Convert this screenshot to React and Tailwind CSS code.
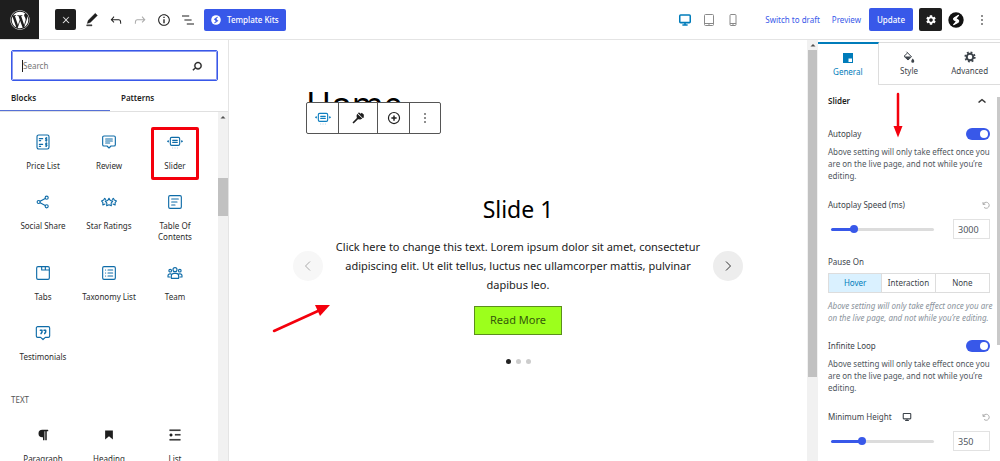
import { useState } from 'react';
import clsx from 'clsx';
import { FaWordpress, FaParagraph } from 'react-icons/fa';
import { MdSettings } from 'react-icons/md';

const PATHS = {
  close: 'M13 11.8l6.1-6.3-1-1-6.1 6.2-6.1-6.2-1 1 6.1 6.3-6.5 6.7 1 1 6.5-6.6 6.5 6.6 1-1z',
  edit: 'M20.1 5.1L16.9 2 6.2 12.7l-1.3 4.4 4.5-1.3L20.1 5.1zM4 20.8h8v-1.5H4v1.5z',
  undo: 'M18.3 11.7c-.6-.6-1.4-.9-2.3-.9H6.7l2.9-3.3-1.1-1-4.5 5L8.5 16l1-1-2.7-2.7H16c.5 0 .9.2 1.3.5 1 1 1 3.4 1 4.5v.3h1.5v-.2c0-1.5 0-4.3-1.5-5.7z',
  redo: 'M15.6 6.5l-1.1 1 2.9 3.3H8c-.9 0-1.7.3-2.3.9-1.4 1.5-1.4 4.2-1.4 5.6v.2h1.5v-.3c0-1.1 0-3.5 1-4.5.3-.3.7-.5 1.3-.5h9.2L14.5 15l1.1 1.1 4.6-4.6-4.6-5z',
  info: 'M12 3.2c-4.8 0-8.8 3.9-8.8 8.8 0 4.8 3.9 8.8 8.8 8.8 4.8 0 8.8-3.9 8.8-8.8 0-4.8-4-8.8-8.8-8.8zm0 16c-4 0-7.2-3.3-7.2-7.2C4.8 8 8 4.8 12 4.8s7.2 3.3 7.2 7.2c0 4-3.2 7.2-7.2 7.2zM11 17h2v-6h-2v6zm0-8h2V7h-2v2z',
  outline: 'M13.8 5.2H3v1.5h10.8V5.2zm-3.6 12v1.5H21v-1.5H10.2zm7.2-6H6.6v1.5h10.8v-1.5z',
  search: 'M13.5 6C10.5 6 8 8.5 8 11.5c0 1.1.3 2.1.9 3l-3.4 3 1 1.1 3.4-2.9c1 .9 2.2 1.4 3.6 1.4 3 0 5.5-2.5 5.5-5.5C19 8.5 16.5 6 13.5 6zm0 9.5c-2.2 0-4-1.8-4-4s1.8-4 4-4 4 1.8 4 4-1.8 4-4 4z',
  more: 'M13 19h-2v-2h2v2zm0-6h-2v-2h2v2zm0-6h-2V5h2v2z',
  chevronUp: 'M6.5 13.4L12 9l5.5 4.4-.9 1.2L12 11l-4.5 3.6-1-1.2z',
  bookmark: 'M6.2 5.2v13.4l5.8-4.8 5.8 4.8V5.2z',
  list: 'M4 4v1.5h16V4H4zm8 8.5h8V11h-8v1.5zM4 20h16v-1.5H4V20zm4-8c0-1.1-.9-2-2-2s-2 .9-2 2 .9 2 2 2 2-.9 2-2z',
};

function Icon({ name, className = 'size-4', bold }) {
  return (
    <svg
      viewBox="0 0 24 24"
      fill="currentColor"
      stroke={bold ? 'currentColor' : 'none'}
      strokeWidth="0.6"
      className={className}
      aria-hidden="true"
    >
      <path d={PATHS[name]} />
    </svg>
  );
}

function Line({ children, className = 'size-4' }) {
  return (
    <svg
      viewBox="0 0 24 24"
      fill="none"
      stroke="currentColor"
      strokeWidth="1.7"
      strokeLinecap="round"
      strokeLinejoin="round"
      className={className}
      aria-hidden="true"
    >
      {children}
    </svg>
  );
}

function SliderIcon({ className }) {
  return (
    <Line className={className}>
      <rect x="5" y="5" width="14" height="12" rx="2" />
      <path d="M8.5 9.5h7M8.5 12.5h7" />
      <path d="M2 10.2v1.6L1 11zM22 10.2v1.6l1-.8z" fill="currentColor" />
      <path d="M8.5 21h.1M12 21h.1M15.5 21h.1" strokeWidth="1.2" opacity="0.5" />
    </Line>
  );
}

function SpectraMark({ className, circle, bolt }) {
  return (
    <svg viewBox="0 0 24 24" className={className} aria-hidden="true">
      <circle cx="12" cy="12" r="11.5" fill={circle} />
      <path
        d="M15.8 5l-6 3.4c-1.8 1-1.9 2.5-.4 3.6l3.6 2.2-4.6 4.8 6.2-3.300c1.8-1 2-2.600.4-3.700l-3.400-2.200z"
        fill={bolt}
        stroke={bolt}
        strokeWidth="1.6"
        strokeLinejoin="round"
      />
    </svg>
  );
}

function DesktopIcon({ className }) {
  return (
    <svg viewBox="0 0 24 24" fill="none" stroke="currentColor" strokeWidth="2.6" className={className} aria-hidden="true">
      <rect x="3" y="3.5" width="18" height="13" rx="1.5" />
      <path d="M7.5 20.5h9M12 17v3" />
    </svg>
  );
}

function PaintIcon({ className }) {
  return (
    <svg viewBox="0 0 24 24" className={className} aria-hidden="true">
      <path d="M7 1.5l10 10-7 6.5L2 10.5 9 4" fill="none" stroke="currentColor" strokeWidth="2" />
      <path d="M3 11h13l-6 6.5z" fill="currentColor" />
      <path d="M19.5 15s3 3.500 3 5.300a3 3 0 0 1-6 0c0-1.800 3-5.300 3-5.300z" fill="currentColor" />
    </svg>
  );
}

const BLOCKS = [
  {
    name: 'Price List',
    icon: (
      <Line>
        <rect x="3" y="1.5" width="18" height="21" rx="2.5" />
        <path d="M6.5 7h5M6.5 15.5h5M6.5 10h2M6.5 18.5h2" />
        <path d="M18 6h-2.200v2H18v2h-2.500M17 5v6M18 14h-2.200v2H18v2h-2.500M17 13v6" strokeWidth="1.400" />
      </Line>
    ),
  },
  {
    name: 'Review',
    icon: (
      <Line>
        <path d="M4.500 3h15a2 2 0 0 1 2 2v11a2 2 0 0 1-2 2h-4.500l-3 3-3-3H4.500a2 2 0 0 1-2-2V5a2 2 0 0 1 2-2z" />
        <path d="M7 7.500h10M7 10.500h10M7 13.500h6" />
      </Line>
    ),
  },
  { name: 'Slider', icon: <SliderIcon /> },
  {
    name: 'Social Share',
    icon: (
      <Line>
        <circle cx="5.500" cy="12" r="2.300" />
        <circle cx="17.500" cy="5.500" r="2.300" />
        <circle cx="17.500" cy="18.500" r="2.300" />
        <path d="M7.600 10.900l7.800-4.300M7.600 13.100l7.800 4.300" />
      </Line>
    ),
  },
  {
    name: 'Star Ratings',
    icon: (
      <Line>
        <path d="M12 6.500l2 3.300 3.600.900-2.400 2.900.300 4-3.500-1.500-3.500 1.500.300-4-2.400-2.900 3.600-.900z" />
        <path d="M7 8L5.500 6.500 4 9 .8 10.500l2 2.500v3.500L6 15M17 8l1.500-1.500L20 9l3.200 1.500-2 2.500v3.500L18 15" />
      </Line>
    ),
  },
  {
    name: 'Table Of Contents',
    icon: (
      <Line>
        <rect x="2.500" y="2.500" width="19" height="19" rx="2" />
        <path d="M7 7.500h10M7 12h8M7 16.500h5" />
      </Line>
    ),
  },
  {
    name: 'Tabs',
    icon: (
      <Line>
        <rect x="2.500" y="2.500" width="19" height="19" rx="2" />
        <path d="M10 3v4.500h11M15.500 3v4.500" />
      </Line>
    ),
  },
  {
    name: 'Taxonomy List',
    icon: (
      <Line>
        <rect x="2.500" y="2.500" width="19" height="19" rx="2" />
        <path d="M10.500 7.500h7M10.500 12h7M10.500 16.500h7M6.800 7.500h.1M6.800 12h.1M6.800 16.500h.1" />
      </Line>
    ),
  },
  {
    name: 'Team',
    icon: (
      <Line>
        <circle cx="12" cy="7" r="3" />
        <circle cx="4.800" cy="8.500" r="2" />
        <circle cx="19.200" cy="8.500" r="2" />
        <path d="M6.500 20v-3.500a4 4 0 0 1 4-4h3a4 4 0 0 1 4 4V20zM6 13.300H4.500a3 3 0 0 0-3 3V18h3M18 13.300h1.500a3 3 0 0 1 3 3V18h-3" />
      </Line>
    ),
  },
  {
    name: 'Testimonials',
    icon: (
      <Line>
        <path d="M4 2.500h16a2 2 0 0 1 2 2v12a2 2 0 0 1-2 2h-4.500L12 21.800l-3.500-3.300H4a2 2 0 0 1-2-2v-12a2 2 0 0 1 2-2z" />
        <path d="M8 8h2.500v2.500L9 13M13.500 8H16v2.500L14.500 13" strokeWidth="2.200" />
      </Line>
    ),
  },
];

const TEXT_BLOCKS = [
  { name: 'Paragraph', icon: <FaParagraph className="size-3" /> },
  { name: 'Heading', icon: <Icon name="bookmark" /> },
  { name: 'List', icon: <Icon name="list" bold /> },
];

function BlockGrid({ blocks, tone }) {
  return (
    <div className="grid grid-cols-3 px-2.5">
      {blocks.map((block) => (
        <button
          key={block.name}
          type="button"
          className="relative flex flex-col items-center gap-2.5 px-2 pt-2 pb-[15px] text-[8px] leading-[11px] text-[#2c2c2c]"
        >
          <span className={clsx('flex h-4 items-center', tone)}>{block.icon}</span>
          <span className="-mx-2">{block.name === 'Table Of Contents' ? <>Table Of<br />Contents</> : block.name}</span>
          {block.name === 'Slider' && (
            <span className="absolute inset-x-[9px] top-px bottom-1.5 rounded-xs border-3 border-[#f4000c]" />
          )}
        </button>
      ))}
    </div>
  );
}

function Header() {
  return (
    <header className="flex h-10 shrink-0 items-center border-b border-[#e4e4e4] bg-white text-[8px] text-[#1e1e1e]">
      <a href="#dashboard" aria-label="View Pages" className="flex h-full w-[39px] items-center justify-center bg-[#1e1e1e] text-white">
        <FaWordpress className="size-5" />
      </a>
      <button type="button" aria-label="Close inserter" className="ml-4 flex size-[21px] items-center justify-center rounded-xs bg-[#1e1e1e] text-white">
        <Icon name="close" className="size-2.5" bold />
      </button>
      <div className="ml-2 flex gap-2">
        <button type="button" aria-label="Tools"><Icon name="edit" bold /></button>
        <button type="button" aria-label="Undo"><Icon name="undo" /></button>
        <button type="button" aria-label="Redo" className="text-[#aaa]"><Icon name="redo" /></button>
        <button type="button" aria-label="Details"><Icon name="info" /></button>
        <button type="button" aria-label="List view"><Icon name="outline" /></button>
      </div>
      <button type="button" className="ml-2 flex h-[22px] items-center gap-1.5 rounded-xs bg-[#3858e9] px-[7px] font-medium text-white">
        <SpectraMark className="size-2.5" circle="#fff" bolt="#3858e9" />
        Template Kits
      </button>

      <div className="ml-auto flex items-center">
        <div className="flex items-center gap-2 text-[#8a8a8a]">
          <button type="button" aria-label="Desktop" className="flex w-4 justify-center text-[#007cba]"><DesktopIcon className="size-3.5" /></button>
          <button type="button" aria-label="Tablet" className="flex w-4 justify-center">
            <svg viewBox="0 0 12 14" fill="none" stroke="currentColor" className="h-3.5 w-3">
              <rect x="1.500" y="1.500" width="9" height="11" rx="1" />
              <path d="M1.500 10.500h9M5.500 11.500h1" />
            </svg>
          </button>
          <button type="button" aria-label="Mobile" className="flex w-4 justify-center">
            <svg viewBox="0 0 12 14" fill="none" stroke="currentColor" className="h-3.5 w-3">
              <rect x="3" y="1.500" width="6" height="11" rx="1" />
              <path d="M3 10.500h6M5.500 11.500h1" />
            </svg>
          </button>
        </div>
        <button type="button" className="ml-6 text-[#3858e9]">Switch to draft</button>
        <a href="#preview" className="ml-3 text-[#3858e9]">Preview</a>
        <button type="button" className="ml-2 h-[23px] rounded-xs bg-[#3858e9] px-2 font-medium text-white">Update</button>
        <button type="button" aria-label="Settings" className="ml-1.5 flex size-[23px] items-center justify-center rounded-xs bg-[#1e1e1e] text-white">
          <MdSettings className="size-3" />
        </button>
        <button type="button" aria-label="Spectra" className="ml-1.5">
          <SpectraMark className="size-4" circle="#111" bolt="#fff" />
        </button>
        <button type="button" aria-label="Options" className="mr-2.5 ml-2.5"><Icon name="more" /></button>
      </div>
    </header>
  );
}

function Inserter() {
  return (
    <aside className="flex w-[229px] shrink-0 flex-col border-r border-[#e4e4e4] bg-white text-[8px]">
      <div className="px-[11px] pt-2.5">
        <label className="-mr-px flex h-[31px] items-center rounded-xs border border-[#3858e9] pr-3 pl-2.5 outline-1 -outline-offset-2 outline-[#8c9bef]">
          <span className="h-3 w-px bg-[#1e1e1e]" />
          <input
            type="search"
            aria-label="Search for blocks and patterns"
            placeholder="Search"
            className="min-w-0 flex-1 outline-none placeholder:text-[#757575]"
          />
          <Icon name="search" className="size-4 text-[#1e1e1e]" bold />
        </label>
      </div>
      <div className="flex h-[31px] shrink-0 border-b border-[#e0e0e0] font-semibold text-[#1e1e1e]">
        <button type="button" className="w-[110px] border-b border-[#5670d6] pt-1 pl-[11px] text-left">Blocks</button>
        <button type="button" className="pt-1 pl-[11px]">Patterns</button>
      </div>
      <div className="flex min-h-0 flex-1">
        <div className="min-w-0 flex-1 overflow-hidden pt-3.5">
          <BlockGrid blocks={BLOCKS} tone="text-[#0f6ca8]" />
          <h2 className="pt-4 pb-3 pl-[11px] leading-[14px] text-[#555]">TEXT</h2>
          <BlockGrid blocks={TEXT_BLOCKS} tone="text-[#1e1e1e]" />
        </div>
        <div className="flex w-2.5 flex-col items-center bg-[#f1f1f1]">
          <ScrollArrow />
          <div className="mt-14 h-[38px] w-2.5 bg-[#c1c1c1]" />
        </div>
      </div>
    </aside>
  );
}

function ScrollArrow() {
  return (
    <svg viewBox="0 0 10 10" className="size-2.5 shrink-0" aria-hidden="true">
      <path d="M2.500 6.500L5 4l2.500 2.500z" fill="#505050" />
    </svg>
  );
}

function BlockToolbar() {
  return (
    <div className="absolute top-full left-0 -mt-[22px] flex h-8 divide-x divide-[#555] rounded-xs border border-[#555] bg-white text-[#1e1e1e]">
      <button type="button" aria-label="Slider" className="flex w-8 items-center justify-center text-[#0f7fc0]"><SliderIcon className="size-4" /></button>
      <button type="button" aria-label="Copy styles" className="flex w-[39px] items-center justify-center">
        <svg viewBox="0 0 24 24" fill="currentColor" className="size-3.5">
          <path d="M11.500 3.500l2.500-1 2.500 2L18.500 3l4 4-1 1.500 1 2-2.500 1.500zM10.500 4.500l9 8.500-3.500 1.500-4-.500L4.500 21.500l-2-2L10 12l-.500-4z" />
        </svg>
      </button>
      <button type="button" aria-label="Add slide" className="flex w-8 items-center justify-center">
        <svg viewBox="0 0 24 24" fill="none" stroke="currentColor" strokeWidth="2" className="size-3.5">
          <circle cx="12" cy="12" r="9.500" />
          <path d="M12 7.500v9M7.500 12h9" strokeWidth="2.500" />
        </svg>
      </button>
      <button type="button" aria-label="Options" className="flex w-[30px] items-center justify-center"><Icon name="more" /></button>
    </div>
  );
}

function SlideArrow({ label, d, className }) {
  return (
    <button type="button" aria-label={label} className={clsx('flex size-[30px] shrink-0 items-center justify-center rounded-full', className)}>
      <svg viewBox="0 0 12 12" fill="none" stroke="currentColor" className="size-3">
        <path d={d} />
      </svg>
    </button>
  );
}

function Canvas() {
  return (
    <main className="relative flex min-w-0 flex-1 bg-white">
      <div className="min-w-0 flex-1 overflow-hidden pt-11">
        <div className="relative ml-[77px]">
          <h1 className="text-[34px] leading-10 text-black">Home</h1>
          <BlockToolbar />
        </div>
        <section className="mx-auto mt-[69px] flex w-full max-w-[450px] flex-col items-center text-center">
          <h2 className="text-[23px] leading-8 text-black">Slide 1</h2>
          <div className="mt-3 flex w-full items-center justify-between">
            <SlideArrow label="Previous slide" d="M8 1.500L3.500 6 8 10.500" className="bg-[#f7f7f7] text-[#aaa]" />
            <p className="px-2 text-[11px] leading-[19px] text-[#222]">
              Click here to change this text. Lorem ipsum dolor sit amet, consectetur adipiscing elit. Ut elit tellus, luctus nec ullamcorper mattis, pulvinar dapibus leo.
            </p>
            <SlideArrow label="Next slide" d="M4 1.500L8.500 6 4 10.500" className="bg-[#ededed] text-[#333]" />
          </div>
          <a href="#read-more" className="mt-3 flex h-[29px] items-center border border-[#5b8f1c] bg-[#9cff1c] px-[15px] text-[11px] text-[#35590a]">Read More</a>
          <div className="mt-6 flex gap-[5px]">
            <span className="size-[5px] rounded-full bg-[#222]" />
            <span className="size-[5px] rounded-full bg-[#ccc]" />
            <span className="size-[5px] rounded-full bg-[#ccc]" />
          </div>
        </section>
      </div>
      <div className="flex w-[11px] shrink-0 flex-col items-center bg-[#f1f1f1]">
        <ScrollArrow />
        <div className="h-[327px] w-[9px] bg-[#c1c1c1]" />
      </div>
      {/* pointer to the slide */}
      <svg viewBox="0 0 60 32" className="absolute top-[262px] left-[43px] h-8 w-[60px]" aria-hidden="true">
        <path d="M2 29L46 9" stroke="#f4000c" strokeWidth="2.500" strokeLinecap="round" />
        <path d="M43 3l15 0-10 11z" fill="#f4000c" />
      </svg>
    </main>
  );
}

function Toggle({ id, label }) {
  const [on, setOn] = useState(true);
  return (
    <div className="flex h-[14px] items-center justify-between">
      <label htmlFor={id}>{label}</label>
      <input
        id={id}
        type="checkbox"
        checked={on}
        onChange={(e) => setOn(e.target.checked)}
        className="flex h-3 w-6 appearance-none items-center justify-start rounded-full bg-[#b5b5b5] px-0.5 before:size-2 before:rounded-full before:bg-white checked:justify-end checked:bg-[#3858e9]"
      />
    </div>
  );
}

function RangeField({ id, label, initial, max, icon }) {
  const [value, setValue] = useState(initial);
  const percent = (value / max) * 100;
  return (
    <div>
      <div className="flex h-[14px] items-center">
        <label htmlFor={id}>{label}</label>
        {icon}
        <button type="button" aria-label={`Reset ${label}`} onClick={() => setValue(initial)} className="ml-auto text-[#999]">
          <svg viewBox="0 0 24 24" fill="none" stroke="currentColor" strokeWidth="2.400" className="size-2">
            <path d="M3 3v7h7M4 10a9 9 0 1 1 2 9" />
          </svg>
        </button>
      </div>
      <div className="mt-[7px] flex items-center gap-[19px] pl-[3px]">
        <input
          id={id}
          type="range"
          min="0"
          max={max}
          value={value}
          onChange={(e) => setValue(Number(e.target.value))}
          className="h-[3px] min-w-0 flex-1 appearance-none rounded-full [&::-webkit-slider-thumb]:size-2 [&::-webkit-slider-thumb]:appearance-none [&::-webkit-slider-thumb]:rounded-full [&::-webkit-slider-thumb]:bg-[#3858e9]"
          style={{ background: `linear-gradient(to right, #3858e9 ${percent}%, #dcdcdc ${percent}%)` }}
        />
        <input
          type="text"
          aria-label={`${label} value`}
          value={value}
          onChange={(e) => setValue(Number(e.target.value) || 0)}
          className="h-5 w-[37px] border border-[#e2e2e2] pl-1 text-[9px] text-[#50575e]"
        />
      </div>
    </div>
  );
}

function Hint() {
  return (
    <p className="mt-[5px] leading-3 text-[#50575e]">
      Above setting will only take effect once you are on the live page, and not while you’re editing.
    </p>
  );
}

function Settings() {
  const [pause, setPause] = useState('Hover');
  return (
    <aside className="relative w-[182px] shrink-0 overflow-hidden bg-white pt-0.5 text-[8px] text-[#3c434a]">
      <div className="grid h-[43px] grid-cols-3">
        <button type="button" className="flex flex-col items-center justify-center border-t-2 border-r border-t-[#007cba] border-r-[#ddd] text-[#007cba]">
          <svg viewBox="0 0 12 12" className="size-3" aria-hidden="true">
            <path d="M1 1h10v10H1zM6.500 6.500v3.500H10V6.500z" fill="currentColor" fillRule="evenodd" />
          </svg>
          <span className="mt-0.5">General</span>
        </button>
        <button type="button" className="flex flex-col items-center justify-center border-t border-b border-[#ddd]">
          <PaintIcon className="size-3" />
          <span className="mt-0.5">Style</span>
        </button>
        <button type="button" className="flex flex-col items-center justify-center border-t border-b border-[#ddd]">
          <svg viewBox="0 0 24 24" fill="none" stroke="currentColor" className="size-3" aria-hidden="true">
            <circle cx="12" cy="12" r="6.500" strokeWidth="4" />
            <circle cx="12" cy="12" r="9.500" strokeWidth="3.500" strokeDasharray="3.730 3.730" />
          </svg>
          <span className="mt-0.5">Advanced</span>
        </button>
      </div>
      <div className="px-2.5">
        <button type="button" className="mt-2 flex h-4 w-full items-center justify-between font-semibold text-[#1e1e1e]">
          Slider
          <Icon name="chevronUp" bold />
        </button>
        <div className="mt-[18px]">
          <Toggle id="autoplay" label="Autoplay" />
          <Hint />
        </div>
        <div className="mt-4">
          <RangeField id="speed" label="Autoplay Speed (ms)" initial={3000} max={15000} />
        </div>
        <fieldset className="mt-4">
          <legend className="leading-[14px]">Pause On</legend>
          <div className="mt-1 grid h-5 grid-cols-3 divide-x divide-[#ddd] border border-[#ddd]">
            {['Hover', 'Interaction', 'None'].map((option) => (
              <button
                key={option}
                type="button"
                aria-pressed={pause === option}
                onClick={() => setPause(option)}
                className={clsx(pause === option && 'bg-[#daf1ff] text-[#007cba]')}
              >
                {option}
              </button>
            ))}
          </div>
          <p className="mt-[7px] -mr-1 leading-3 text-[#8a939c] italic">
            Above setting will only take effect once you are on the live page, and not while you’re editing.
          </p>
        </fieldset>
        <div className="mt-[15px]">
          <Toggle id="loop" label="Infinite Loop" />
          <Hint />
        </div>
        <div className="mt-4">
          <RangeField
            id="height"
            label="Minimum Height"
            initial={350}
            max={1250}
            icon={<DesktopIcon className="ml-2.5 size-2.5" />}
          />
        </div>
      </div>
      <div className="absolute top-[57px] right-0 h-[248px] w-[3px] bg-[#c9c9c9]" />
      {/* pointer to the autoplay switch */}
      <svg viewBox="0 0 10 46" className="absolute top-[52px] left-[75px] h-[46px] w-2.5" aria-hidden="true">
        <path d="M5 2v34" stroke="#f4000c" strokeWidth="2.500" strokeLinecap="round" />
        <path d="M.5 34h9L5 45.500z" fill="#f4000c" />
      </svg>
    </aside>
  );
}

export default function App() {
  return (
    <div className="flex h-screen flex-col overflow-hidden bg-white font-['Noto_Sans','Open_Sans',sans-serif]">
      <Header />
      <div className="flex min-h-0 flex-1">
        <Inserter />
        <Canvas />
        <Settings />
      </div>
    </div>
  );
}
